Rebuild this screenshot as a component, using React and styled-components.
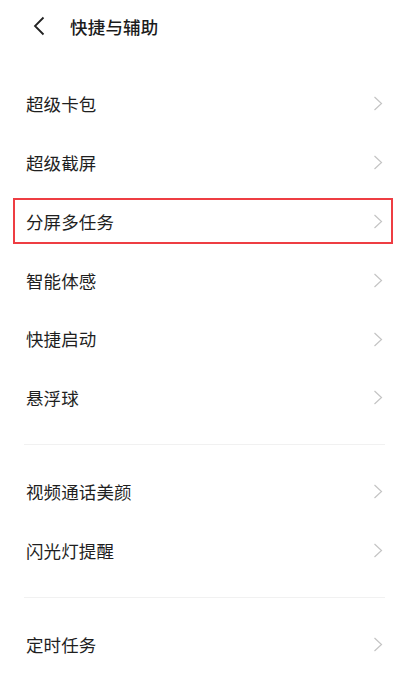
import styled, { createGlobalStyle } from 'styled-components';

const GlobalStyle = createGlobalStyle`
  html, body {
    margin: 0;
    padding: 0;
    background: #ffffff;
  }
  body {
    font-family: "Noto Sans CJK SC", "Noto Sans", sans-serif;
    color: #1f1f1f;
  }
`;

const Screen = styled.div`
  width: 405px;
  min-height: 680px;
  background: #ffffff;
  overflow: hidden;
`;

const Header = styled.header`
  height: 52px;
  display: flex;
  align-items: center;
  padding-left: 30px;
  gap: 22px;
`;

const BackButton = styled.span`
  display: flex;
  width: 18px;
  height: 20px;
  align-items: center;
  justify-content: center;
  color: #222;
`;

const Title = styled.h1`
  margin: 0;
  font-size: 17.5px;
  font-weight: 500;
  letter-spacing: 0.2px;
  color: #1c1c1c;
`;

const List = styled.div`
  padding-top: 22.5px;
`;

const Row = styled.div`
  position: relative;
  height: 58.8px;
  display: flex;
  align-items: center;
  justify-content: space-between;
  padding: 0 22px 0 26px;

  ${({ $marked }) =>
    $marked &&
    `
    &::after {
      content: '';
      position: absolute;
      left: 13px;
      right: 12px;
      top: 5.5px;
      height: 46px;
      box-sizing: border-box;
      border: 2px solid #ee3d43;
      pointer-events: none;
    }
  `}
`;

const Label = styled.span`
  font-size: 17.5px;
  line-height: 1;
  color: #1f1f1f;
  letter-spacing: 0.1px;
`;

const Chevron = styled.svg`
  width: 10px;
  height: 15px;
  flex: none;
`;

const Divider = styled.div`
  height: 1px;
  margin: 16.6px 20px 17.6px 24px;
  background: #f1f1f1;
`;

const sections = [
  ['超级卡包', '超级截屏', '分屏多任务', '智能体感', '快捷启动', '悬浮球'],
  ['视频通话美颜', '闪光灯提醒'],
  ['定时任务'],
];

function Arrow() {
  return (
    <Chevron viewBox="0 0 10 15">
      <path d="M1.5 1 L8.5 7.5 L1.5 14" fill="none" stroke="#c4c4c4" strokeWidth="1.2" />
    </Chevron>
  );
}

export default function App() {
  return (
    <>
      <GlobalStyle />
      <Screen>
        <Header>
          <BackButton>
            <svg width="14" height="20" viewBox="0 0 14 20">
              <path d="M11.5 1.5 L3 10 L11.5 18.5" fill="none" stroke="#222" strokeWidth="1.8" />
            </svg>
          </BackButton>
          <Title>快捷与辅助</Title>
        </Header>
        <List>
          {sections.map((items, i) => (
            <div key={i}>
              {i > 0 && <Divider />}
              {items.map((label) => (
                <Row key={label} $marked={label === '分屏多任务'}>
                  <Label>{label}</Label>
                  <Arrow />
                </Row>
              ))}
            </div>
          ))}
        </List>
      </Screen>
    </>
  );
}
